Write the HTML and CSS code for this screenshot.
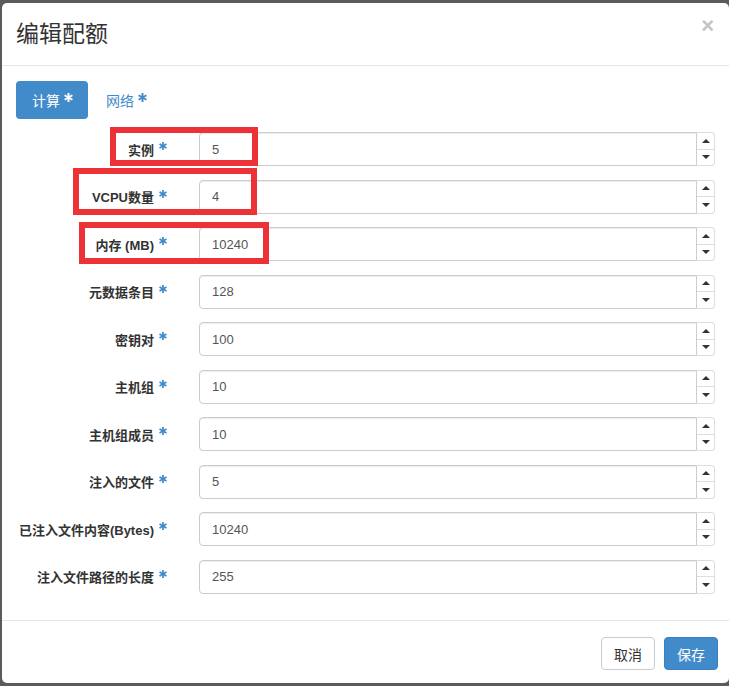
FILE: index.html
```html
<!DOCTYPE html>
<html lang="zh">
<head>
<meta charset="utf-8">
<title>编辑配额</title>
<link rel="stylesheet" href="styles.css">
</head>
<body>
<div class="modal">
  <div class="modal-header">
    <h4 class="title">编辑配额</h4>
    <span class="close">×</span>
  </div>
  <div class="modal-body">
    <div class="tabs">
      <span class="tab active">计算 <svg class="ast" viewBox="0 0 10 10"><g fill="currentColor"><rect x="3.9" y="0" width="2.2" height="10"/><rect x="3.9" y="0" width="2.2" height="10" transform="rotate(60 5 5)"/><rect x="3.9" y="0" width="2.2" height="10" transform="rotate(-60 5 5)"/></g></svg></span>
      <span class="tab">网络 <svg class="ast" viewBox="0 0 10 10"><g fill="currentColor"><rect x="3.9" y="0" width="2.2" height="10"/><rect x="3.9" y="0" width="2.2" height="10" transform="rotate(60 5 5)"/><rect x="3.9" y="0" width="2.2" height="10" transform="rotate(-60 5 5)"/></g></svg></span>
    </div>
    <div class="form">
      <div class="row"><label class="lbl">实例<svg class="req" viewBox="0 0 10 10"><g fill="currentColor"><rect x="3.9" y="0" width="2.2" height="10"/><rect x="3.9" y="0" width="2.2" height="10" transform="rotate(60 5 5)"/><rect x="3.9" y="0" width="2.2" height="10" transform="rotate(-60 5 5)"/></g></svg></label><div class="num"><input class="inp" type="text" value="5"><div class="spin"><span class="btn-s"><i class="up"></i></span><span class="btn-s"><i class="dn"></i></span></div></div></div>
      <div class="row"><label class="lbl">VCPU数量<svg class="req" viewBox="0 0 10 10"><g fill="currentColor"><rect x="3.9" y="0" width="2.2" height="10"/><rect x="3.9" y="0" width="2.2" height="10" transform="rotate(60 5 5)"/><rect x="3.9" y="0" width="2.2" height="10" transform="rotate(-60 5 5)"/></g></svg></label><div class="num"><input class="inp" type="text" value="4"><div class="spin"><span class="btn-s"><i class="up"></i></span><span class="btn-s"><i class="dn"></i></span></div></div></div>
      <div class="row"><label class="lbl">内存 (MB)<svg class="req" viewBox="0 0 10 10"><g fill="currentColor"><rect x="3.9" y="0" width="2.2" height="10"/><rect x="3.9" y="0" width="2.2" height="10" transform="rotate(60 5 5)"/><rect x="3.9" y="0" width="2.2" height="10" transform="rotate(-60 5 5)"/></g></svg></label><div class="num"><input class="inp" type="text" value="10240"><div class="spin"><span class="btn-s"><i class="up"></i></span><span class="btn-s"><i class="dn"></i></span></div></div></div>
      <div class="row"><label class="lbl">元数据条目<svg class="req" viewBox="0 0 10 10"><g fill="currentColor"><rect x="3.9" y="0" width="2.2" height="10"/><rect x="3.9" y="0" width="2.2" height="10" transform="rotate(60 5 5)"/><rect x="3.9" y="0" width="2.2" height="10" transform="rotate(-60 5 5)"/></g></svg></label><div class="num"><input class="inp" type="text" value="128"><div class="spin"><span class="btn-s"><i class="up"></i></span><span class="btn-s"><i class="dn"></i></span></div></div></div>
      <div class="row"><label class="lbl">密钥对<svg class="req" viewBox="0 0 10 10"><g fill="currentColor"><rect x="3.9" y="0" width="2.2" height="10"/><rect x="3.9" y="0" width="2.2" height="10" transform="rotate(60 5 5)"/><rect x="3.9" y="0" width="2.2" height="10" transform="rotate(-60 5 5)"/></g></svg></label><div class="num"><input class="inp" type="text" value="100"><div class="spin"><span class="btn-s"><i class="up"></i></span><span class="btn-s"><i class="dn"></i></span></div></div></div>
      <div class="row"><label class="lbl">主机组<svg class="req" viewBox="0 0 10 10"><g fill="currentColor"><rect x="3.9" y="0" width="2.2" height="10"/><rect x="3.9" y="0" width="2.2" height="10" transform="rotate(60 5 5)"/><rect x="3.9" y="0" width="2.2" height="10" transform="rotate(-60 5 5)"/></g></svg></label><div class="num"><input class="inp" type="text" value="10"><div class="spin"><span class="btn-s"><i class="up"></i></span><span class="btn-s"><i class="dn"></i></span></div></div></div>
      <div class="row"><label class="lbl">主机组成员<svg class="req" viewBox="0 0 10 10"><g fill="currentColor"><rect x="3.9" y="0" width="2.2" height="10"/><rect x="3.9" y="0" width="2.2" height="10" transform="rotate(60 5 5)"/><rect x="3.9" y="0" width="2.2" height="10" transform="rotate(-60 5 5)"/></g></svg></label><div class="num"><input class="inp" type="text" value="10"><div class="spin"><span class="btn-s"><i class="up"></i></span><span class="btn-s"><i class="dn"></i></span></div></div></div>
      <div class="row"><label class="lbl">注入的文件<svg class="req" viewBox="0 0 10 10"><g fill="currentColor"><rect x="3.9" y="0" width="2.2" height="10"/><rect x="3.9" y="0" width="2.2" height="10" transform="rotate(60 5 5)"/><rect x="3.9" y="0" width="2.2" height="10" transform="rotate(-60 5 5)"/></g></svg></label><div class="num"><input class="inp" type="text" value="5"><div class="spin"><span class="btn-s"><i class="up"></i></span><span class="btn-s"><i class="dn"></i></span></div></div></div>
      <div class="row"><label class="lbl">已注入文件内容(Bytes)<svg class="req" viewBox="0 0 10 10"><g fill="currentColor"><rect x="3.9" y="0" width="2.2" height="10"/><rect x="3.9" y="0" width="2.2" height="10" transform="rotate(60 5 5)"/><rect x="3.9" y="0" width="2.2" height="10" transform="rotate(-60 5 5)"/></g></svg></label><div class="num"><input class="inp" type="text" value="10240"><div class="spin"><span class="btn-s"><i class="up"></i></span><span class="btn-s"><i class="dn"></i></span></div></div></div>
      <div class="row"><label class="lbl">注入文件路径的长度<svg class="req" viewBox="0 0 10 10"><g fill="currentColor"><rect x="3.9" y="0" width="2.2" height="10"/><rect x="3.9" y="0" width="2.2" height="10" transform="rotate(60 5 5)"/><rect x="3.9" y="0" width="2.2" height="10" transform="rotate(-60 5 5)"/></g></svg></label><div class="num"><input class="inp" type="text" value="255"><div class="spin"><span class="btn-s"><i class="up"></i></span><span class="btn-s"><i class="dn"></i></span></div></div></div>
    </div>
  </div>
  <div class="modal-footer">
    <button class="btn btn-default">取消</button>
    <button class="btn btn-primary">保存</button>
  </div>
  <div class="mark mark1"></div>
  <div class="mark mark2"></div>
  <div class="mark mark3"></div>
</div>
</body>
</html>
```

FILE: styles.css
```css
html, body {
  margin: 0;
  padding: 0;
}
body {
  background: #5b5b5b;
  width: 729px;
  height: 686px;
  overflow: hidden;
  font-family: "Liberation Sans", "Noto Sans CJK SC", sans-serif;
  font-size: 13px;
  color: #333;
}
.modal {
  position: relative;
  margin: 3px 0 0 2px;
  width: 727px;
  height: 680px;
  background: #fff;
  border-radius: 5px;
  box-sizing: border-box;
}
.modal-header {
  display: flex;
  align-items: center;
  justify-content: space-between;
  height: 62px;
  padding: 0 14px;
  border-bottom: 1px solid #e5e5e5;
}
.title {
  margin: 0;
  font-size: 23px;
  font-weight: normal;
  color: #333;
  line-height: 1;
}
.close {
  font-size: 22px;
  font-weight: bold;
  color: #c4c4c4;
  line-height: 1;
  margin-top: -16px;
  margin-right: 1px;
}
.modal-body {
  padding: 15px 14px 0 14px;
  height: 555px;
  box-sizing: border-box;
  border-bottom: 1px solid #e5e5e5;
}
.tabs {
  display: flex;
  align-items: center;
  gap: 2px;
  height: 38px;
  margin-bottom: 13px;
}
.tab {
  display: flex;
  align-items: center;
  height: 38px;
  padding: 0 16px;
  font-size: 14px;
  color: #428bca;
  border-radius: 4px;
  box-sizing: border-box;
}
.tab.active {
  background: #428bca;
  color: #fff;
  padding: 0 15px 0 16px;
}
.ast {
  width: 9px;
  height: 9px;
  margin-left: 4px;
  margin-top: -6px;
}
.form {
  display: flex;
  flex-direction: column;
  gap: 13.5px;
}
.row {
  display: flex;
  align-items: center;
  height: 34px;
}
.lbl {
  width: 151px;
  flex: none;
  display: flex;
  justify-content: flex-end;
  align-items: center;
  font-weight: bold;
  font-size: 13px;
  color: #333;
  padding-right: 32px;
  white-space: nowrap;
}
.req {
  width: 8px;
  height: 8px;
  color: #428bca;
  margin-left: 5px;
  margin-top: -6px;
}
.num {
  flex: 1;
  display: flex;
  height: 34px;
}
.inp {
  flex: 1;
  min-width: 0;
  height: 34px;
  box-sizing: border-box;
  border: 1px solid #ccc;
  border-radius: 4px 0 0 4px;
  padding: 0 12px;
  font-family: "Liberation Sans", sans-serif;
  font-size: 13px;
  color: #555;
  outline: none;
  box-shadow: inset 0 1px 1px rgba(0,0,0,0.075);
}
.spin {
  width: 18px;
  display: flex;
  flex-direction: column;
}
.btn-s {
  flex: 1;
  display: flex;
  align-items: center;
  justify-content: center;
  border: 1px solid #ddd;
  border-left: none;
  background: #fff;
}
.btn-s:first-child {
  border-radius: 0 4px 0 0;
  border-bottom: 1px solid #ddd;
}
.btn-s:last-child {
  border-top: none;
  border-radius: 0 0 4px 0;
}
.up {
  width: 0;
  height: 0;
  border-left: 4px solid transparent;
  border-right: 4px solid transparent;
  border-bottom: 4px solid #333;
}
.dn {
  width: 0;
  height: 0;
  border-left: 4px solid transparent;
  border-right: 4px solid transparent;
  border-top: 4px solid #333;
}
.modal-footer {
  display: flex;
  justify-content: flex-end;
  align-items: center;
  gap: 9px;
  padding: 16px 11px 0 0;
}
.btn {
  height: 33px;
  padding: 0 12px;
  font-family: "Noto Sans CJK SC", sans-serif;
  font-size: 14px;
  border-radius: 4px;
  box-sizing: border-box;
}
.btn-default {
  background: #fff;
  border: 1px solid #ccc;
  color: #333;
}
.btn-primary {
  background: #428bca;
  border: 1px solid #3b7fc0;
  color: #fff;
}
.mark {
  position: absolute;
  border: 6px solid #ec3237;
  box-sizing: border-box;
}
.mark1 { left: 108px; top: 124px; width: 148px; height: 39px; }
.mark2 { left: 71px; top: 165px; width: 184px; height: 47px; }
.mark3 { left: 77px; top: 219px; width: 190px; height: 42px; }
```
